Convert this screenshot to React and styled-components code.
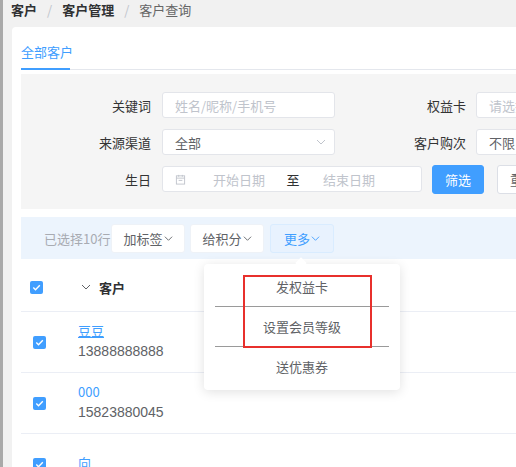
import React from "react"
import styled, { createGlobalStyle } from "styled-components"

const GlobalStyle = createGlobalStyle`
    html, body {
        margin: 0;
        padding: 0;
    }
    body {
        background: #f1f1f1;
        font-family: "Noto Sans CJK SC", "Liberation Sans", sans-serif;
        font-size: 13px;
        color: #606266;
        overflow: hidden;
        width: 516px;
        height: 467px;
    }
`

const Chevron = ({ size = 9, color = "currentColor" }) => (
    <svg width={size} height={size} viewBox="0 0 10 10" fill="none">
        <path d="M1 3 L5 7 L9 3" stroke={color} strokeWidth="1" />
    </svg>
)

const CalendarIcon = () => (
    <svg width="11" height="11" viewBox="0 0 12 12" fill="none" stroke="#c0c4cc" strokeWidth="1">
        <rect x="1.5" y="2" width="9" height="9" />
        <path d="M1.5 4.5 H10.5 M4 1 V3 M8 1 V3 M4 7 H8" />
    </svg>
)

const Check = () => (
    <svg width="13" height="13" viewBox="0 0 13 13">
        <rect width="13" height="13" rx="2" fill="#409eff" />
        <path d="M3.3 6.6 L5.5 8.8 L9.8 4.3" stroke="#fff" strokeWidth="1.4" fill="none" />
    </svg>
)

const rows = [
    { name: "豆豆", phone: "13888888888", underline: true },
    { name: "000", phone: "15823880045" },
    { name: "向", phone: "" },
]

function App() {
    return (
        <Page>
            <GlobalStyle />
            <Breadcrumb>
                <Crumb strong>客户</Crumb>
                <Sep>/</Sep>
                <Crumb strong>客户管理</Crumb>
                <Sep>/</Sep>
                <Crumb>客户查询</Crumb>
            </Breadcrumb>
            <Card>
                <Tabs>
                    <Tab>全部客户</Tab>
                </Tabs>
                <Filter>
                    <FilterRow>
                        <Label>关键词</Label>
                        <Input>姓名/昵称/手机号</Input>
                        <RightLabel>权益卡</RightLabel>
                        <Input>请选择</Input>
                    </FilterRow>
                    <FilterRow>
                        <Label>来源渠道</Label>
                        <Input filled>
                            <span>全部</span>
                            <SelectArrow><Chevron size={10} color="#c0c4cc" /></SelectArrow>
                        </Input>
                        <RightLabel>客户购次</RightLabel>
                        <Input filled>不限</Input>
                    </FilterRow>
                    <FilterRow>
                        <Label>生日</Label>
                        <DateRange>
                            <DateIcon><CalendarIcon /></DateIcon>
                            <DatePart w={88}>开始日期</DatePart>
                            <DateSep>至</DateSep>
                            <DatePart w={92}>结束日期</DatePart>
                        </DateRange>
                        <Button primary>筛选</Button>
                        <Button>重置</Button>
                    </FilterRow>
                </Filter>
                <BatchBar>
                    <Selected>已选择10行</Selected>
                    <BatchButton w={74}>加标签<Chevron /></BatchButton>
                    <BatchButton w={74}>给积分<Chevron /></BatchButton>
                    <MoreWrap>
                        <BatchButton w={64} active>更多<Chevron /></BatchButton>
                        <Dropdown>
                            <Arrow />
                            <MenuItem>发权益卡</MenuItem>
                            <MenuLine />
                            <MenuItem>设置会员等级</MenuItem>
                            <MenuLine />
                            <MenuItem>送优惠券</MenuItem>
                            <Mark />
                        </Dropdown>
                    </MoreWrap>
                </BatchBar>
                <Table>
                    <HeadRow>
                        <Check />
                        <HeadTitle>
                            <Chevron size={10} color="#606266" />
                            <b>客户</b>
                        </HeadTitle>
                    </HeadRow>
                    {rows.map((r, i) => (
                        <Row key={i}>
                            <CheckCell><Check /></CheckCell>
                            <Customer>
                                <Name underline={r.underline}>{r.name}</Name>
                                <Phone>{r.phone}</Phone>
                            </Customer>
                        </Row>
                    ))}
                </Table>
            </Card>
        </Page>
    )
}

const Page = styled.div`
    border-left: 3px solid #a9a9a9;
    padding-left: 9px;
    height: 467px;
    box-sizing: border-box;
`

const Breadcrumb = styled.div`
    height: 20px;
    display: flex;
    align-items: center;
    line-height: 18px;
    margin-left: -1px;
`

const Crumb = styled.span`
    font-weight: ${(p) => (p.strong ? 700 : 400)};
    color: ${(p) => (p.strong ? "#303133" : "#666")};
`

const Sep = styled.span`
    color: #c0c4cc;
    margin: 0 10px;
`

const Card = styled.div`
    background: #fff;
    border-radius: 4px 0 0 0;
    width: 660px;
    padding: 8px 9px 0;
    box-sizing: border-box;
    margin-top: 7px;
`

const Tabs = styled.div`
    border-bottom: 1px solid #e4e7ed;
    display: flex;
`

const Tab = styled.div`
    color: #409eff;
    height: 33px;
    line-height: 33px;
    border-bottom: 2px solid #409eff;
    margin-bottom: -1px;
    width: 49px;
    white-space: nowrap;
`

const Filter = styled.div`
    background: #f5f5f5;
    margin-top: 4px;
    padding: 18px 0 17px;
    display: flex;
    flex-direction: column;
    gap: 11px;
`

const FilterRow = styled.div`
    display: flex;
    align-items: center;
    height: 26px;
`

const Label = styled.div`
    width: 130px;
    flex-shrink: 0;
    text-align: right;
    margin-right: 11px;
    color: #333;
`

const RightLabel = styled(Label)`
    width: 131px;
    margin-right: 10px;
`

const Input = styled.div`
    width: 173px;
    flex-shrink: 0;
    height: 26px;
    box-sizing: border-box;
    border: 1px solid #e3e5ea;
    border-radius: 3px;
    background: #fff;
    display: flex;
    align-items: center;
    justify-content: space-between;
    padding: 0 12px;
    color: ${(p) => (p.filled ? "#606266" : "#c0c4cc")};
    white-space: nowrap;
`

const SelectArrow = styled.span`
    display: flex;
    margin-right: -4px;
`

const DateRange = styled(Input)`
    width: 260px;
    justify-content: flex-start;
    padding: 0;
    margin-right: 10px;
`

const DateIcon = styled.span`
    width: 30px;
    display: flex;
    justify-content: center;
    padding-left: 2px;
`

const DatePart = styled.span`
    width: ${(p) => p.w}px;
    text-align: center;
    color: #c0c4cc;
`

const DateSep = styled.span`
    width: 20px;
    text-align: center;
    color: #303133;
`

const Button = styled.div`
    width: 52px;
    height: 29px;
    flex-shrink: 0;
    box-sizing: border-box;
    border-radius: 3px;
    display: flex;
    align-items: center;
    justify-content: center;
    background: ${(p) => (p.primary ? "#409eff" : "#fff")};
    color: ${(p) => (p.primary ? "#fff" : "#606266")};
    border: 1px solid ${(p) => (p.primary ? "#409eff" : "#dcdfe6")};
    margin-right: 13px;
`

const BatchBar = styled.div`
    background: #ecf4fd;
    margin-top: 8px;
    height: 42px;
    display: flex;
    align-items: center;
    padding-left: 23px;
`

const Selected = styled.span`
    color: #a8abb2;
    width: 67px;
`

const BatchButton = styled.div`
    width: ${(p) => p.w}px;
    height: 29px;
    box-sizing: border-box;
    border: 1px solid ${(p) => (p.active ? "#d9ecff" : "#eef2f7")};
    background: ${(p) => (p.active ? "#e8f2fe" : "#fff")};
    color: ${(p) => (p.active ? "#409eff" : "#606266")};
    border-radius: 3px;
    display: flex;
    align-items: center;
    justify-content: center;
    gap: 1px;
    margin-right: 5px;
`

const MoreWrap = styled.div`
    position: relative;
    margin-left: 1px;
`

const Dropdown = styled.div`
    position: absolute;
    top: 40px;
    left: -66px;
    width: 196px;
    background: #fff;
    border-radius: 4px;
    box-shadow: 0 2px 12px rgba(0, 0, 0, 0.12);
    padding: 3px 0 4px;
    z-index: 5;
`

const Arrow = styled.div`
    position: absolute;
    top: -5px;
    left: 93px;
    width: 8px;
    height: 8px;
    background: #fff;
    transform: rotate(45deg);
`

const MenuItem = styled.div`
    height: 39px;
    display: flex;
    align-items: center;
    justify-content: center;
    color: #606266;
`

const MenuLine = styled.div`
    height: 1px;
    background: #9a9a9a;
    margin: 0 11px;
`

const Mark = styled.div`
    position: absolute;
    left: 39px;
    top: 11px;
    width: 129px;
    height: 73px;
    box-sizing: border-box;
    border: 2px solid #e8302c;
`

const Table = styled.div`
    margin-top: 4px;
`

const HeadRow = styled.div`
    height: 48px;
    display: flex;
    align-items: center;
    padding-left: 9px;
    border-bottom: 1px solid #ebeef5;
`

const HeadTitle = styled.div`
    display: flex;
    align-items: center;
    gap: 8px;
    margin-left: 38px;
    color: #303133;
    b {
        font-weight: 700;
    }
`

const Row = styled.div`
    height: 61px;
    box-sizing: border-box;
    display: flex;
    align-items: center;
    border-bottom: 1px solid #ebeef5;
`

const CheckCell = styled.div`
    width: 57px;
    padding-left: 12px;
    box-sizing: border-box;
    display: flex;
    margin-top: 1px;
`

const Customer = styled.div`
    display: flex;
    flex-direction: column;
    line-height: 20px;
    margin-top: -2px;
`

const Name = styled.span`
    color: #409eff;
    text-decoration: ${(p) => (p.underline ? "underline" : "none")};
`

const Phone = styled.span`
    color: #606266;
    font-family: "Liberation Sans", "Noto Sans CJK SC", sans-serif;
    font-size: 14px;
`

export default App
